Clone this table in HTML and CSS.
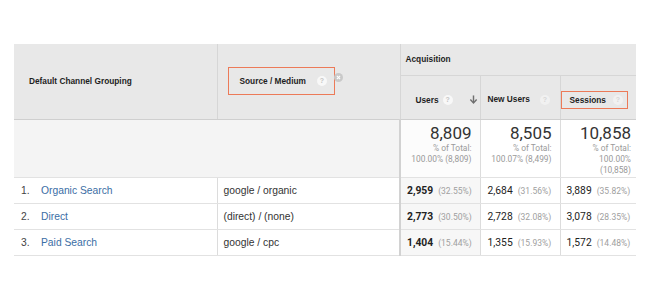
FILE: index.html
```html
<!DOCTYPE html>
<html>
<head>
<meta charset="utf-8">
<link rel="stylesheet" href="styles.css">
</head>
<body>
<div class="wrap">
<table class="report">
  <colgroup>
    <col class="c-dim1"><col class="c-dim2"><col class="c-users"><col class="c-new"><col class="c-sess">
  </colgroup>
  <thead>
    <tr class="hrow1">
      <th rowspan="2" class="h-dim1">Default Channel Grouping</th>
      <th rowspan="2" class="h-dim2">
        <div class="h-dim2-inner">
          <span class="annot annot-src">Source / Medium <span class="qicon">?</span></span>
          <span class="xicon"><svg viewBox="0 0 10 10" width="9" height="9"><circle cx="5" cy="5" r="5" fill="#c9c9c9"/><path d="M3.2 3.2 L6.8 6.8 M6.8 3.2 L3.2 6.8" stroke="#fff" stroke-width="1.2"/></svg></span>
        </div>
      </th>
      <th colspan="3" class="h-group">Acquisition</th>
    </tr>
    <tr class="hrow2">
      <th class="h-metric h-users">
        <div class="h-users-inner">
          <span>Users</span><span class="qicon">?</span>
          <span class="sortarrow"><svg viewBox="0 0 10 10" width="9" height="9"><path d="M5 0.5 V8.5" stroke="#6f6f6f" stroke-width="1.6"/><path d="M1.5 5 L5 8.8 L8.5 5" fill="none" stroke="#6f6f6f" stroke-width="1.6"/></svg></span>
        </div>
      </th>
      <th class="h-metric h-new"><span>New Users</span><span class="qicon">?</span></th>
      <th class="h-metric h-sess"><span class="annot annot-sess">Sessions <span class="qicon">?</span></span></th>
    </tr>
  </thead>
  <tbody>
    <tr class="totals">
      <td colspan="2" class="tot-blank"></td>
      <td class="tot tot-users"><div class="big">8,809</div><div class="sub">% of Total:<br>100.00% (8,809)</div></td>
      <td class="tot"><div class="big">8,505</div><div class="sub">% of Total:<br>100.07% (8,499)</div></td>
      <td class="tot tot-sess"><div class="big">10,858</div><div class="sub">% of Total:<br>100.00%<br>(10,858)</div></td>
    </tr>
    <tr class="row">
      <td class="d-dim1"><span class="idx">1.</span><a class="link">Organic Search</a></td>
      <td class="d-dim2">google / organic</td>
      <td class="m m-users"><b>2,959</b><span class="pct">(32.55%)</span></td>
      <td class="m m-new">2,684<span class="pct">(31.56%)</span></td>
      <td class="m m-sess">3,889<span class="pct">(35.82%)</span></td>
    </tr>
    <tr class="row">
      <td class="d-dim1"><span class="idx">2.</span><a class="link">Direct</a></td>
      <td class="d-dim2">(direct) / (none)</td>
      <td class="m m-users"><b>2,773</b><span class="pct">(30.50%)</span></td>
      <td class="m m-new">2,728<span class="pct">(32.08%)</span></td>
      <td class="m m-sess">3,078<span class="pct">(28.35%)</span></td>
    </tr>
    <tr class="row">
      <td class="d-dim1"><span class="idx">3.</span><a class="link">Paid Search</a></td>
      <td class="d-dim2">google / cpc</td>
      <td class="m m-users"><b>1,404</b><span class="pct">(15.44%)</span></td>
      <td class="m m-new">1,355<span class="pct">(15.93%)</span></td>
      <td class="m m-sess">1,572<span class="pct">(14.48%)</span></td>
    </tr>
  </tbody>
</table>
</div>
</body>
</html>
```

FILE: styles.css
```css
html, body {
  margin: 0;
  padding: 0;
  background: #ffffff;
}
.wrap {
  padding: 44px 0 0 14px;
}
.report {
  border-collapse: collapse;
  table-layout: fixed;
  width: 622px;
  font-family: "Liberation Sans", Arial, sans-serif;
  color: #222;
}
.c-dim1 { width: 203px; }
.c-dim2 { width: 183px; }
.c-users { width: 80px; }
.c-new { width: 80px; }
.c-sess { width: 76px; }

.report th {
  background: #e8e8e8;
  font-size: 8.3px;
  font-weight: bold;
  text-align: left;
  color: #1e1e1e;
  padding: 0;
}
.hrow1 { height: 31px; }
.hrow2 { height: 44px; }
.h-dim1 {
  padding-left: 15px !important;
  border-right: 1px solid #d6d6d6;
  border-bottom: 1px solid #cfcfcf;
  vertical-align: middle;
}
.h-dim2 {
  padding-left: 10px !important;
  border-right: 1px solid #d6d6d6;
  border-bottom: 1px solid #cfcfcf;
  vertical-align: middle;
}
.h-dim2-inner {
  display: flex;
  align-items: center;
  padding-bottom: 1px;
}
.annot {
  display: inline-flex;
  align-items: center;
  border: 1px solid #ec7a58;
  box-sizing: border-box;
}
.annot-src {
  height: 28px;
  width: 107px;
  padding-left: 11px;
}
.annot-src .qicon { margin-left: 11px; }
.xicon {
  display: inline-flex;
  margin-left: -1px;
  margin-top: -7px;
}
.qicon {
  display: inline-flex;
  align-items: center;
  justify-content: center;
  flex: none;
  width: 10px;
  height: 10px;
  border-radius: 50%;
  background: #f8f8f8;
  color: #c4c4c4;
  font-size: 7px;
  font-weight: bold;
  margin-left: 5px;
}
.h-group {
  padding-left: 5px !important;
  vertical-align: middle;
  border-bottom: 1px solid #d6d6d6;
}
.h-metric {
  vertical-align: middle;
  border-bottom: 1px solid #cfcfcf;
  padding-top: 5px !important;
  white-space: nowrap;
}
.h-users {
  padding-left: 15px !important;
  border-right: 1px solid #d6d6d6;
}
.h-users-inner {
  display: flex;
  align-items: center;
}
.h-users-inner .qicon { margin-left: 4px; }
.sortarrow {
  display: inline-flex;
  margin-left: auto;
  margin-right: 2px;
}
.h-new {
  padding-left: 7px !important;
  border-right: 1px solid #d6d6d6;
}
.h-new .qicon { margin-left: 10px; background: #f1f1f1; color: #d6d6d6; }
.h-sess {
  padding-left: 0;
}
.annot-sess {
  height: 18px;
  padding: 0 4px 0 8px;
}
.annot-sess .qicon { margin-left: 7px; background: #f1f1f1; color: #d6d6d6; }

/* totals */
.totals { height: 58px; }
.tot-blank {
  background: #f4f4f4;
  border-right: 2px solid #d2d2d2;
  border-bottom: 1px solid #e2e2e2;
}
.tot {
  vertical-align: top;
  text-align: right;
  padding: 3px 8px 0 0;
  border-right: 1px solid #dcdcdc;
  border-bottom: 1px solid #e2e2e2;
  background: #fff;
}
.tot-sess { padding-right: 5px; border-right: none; }
.tot-users { background: #fcfcfc; }
.big {
  font-family: Roboto, "Liberation Sans", sans-serif;
  font-size: 17px;
  line-height: 20px;
  color: #333;
}
.sub {
  font-family: Roboto, "Liberation Sans", sans-serif;
  font-size: 8.4px;
  line-height: 11px;
  color: #9a9a9a;
}

/* rows */
.row { height: 26px; }
.row td {
  font-size: 10.3px;
  border-bottom: 1px solid #e2e2e2;
  vertical-align: middle;
  white-space: nowrap;
}
.d-dim1 {
  padding-left: 7px;
  border-right: 1px solid #dcdcdc;
}
.idx {
  display: inline-block;
  width: 20px;
  color: #444;
}
.link { color: #3b6ea5; }
.d-dim2 {
  padding-left: 6px;
  color: #333;
  border-right: 2px solid #d2d2d2;
}
.m {
  font-family: Roboto, "Liberation Sans", sans-serif;
  color: #222;
}
.m b { font-weight: bold; }
.m-users {
  padding-left: 6px;
  background: #f7f7f7;
  border-right: 1px solid #dcdcdc;
}
.m-new {
  padding-left: 7px;
  border-right: 1px solid #dcdcdc;
}
.m-sess { padding-left: 6px; }
.pct {
  font-size: 8.5px;
  color: #a0a0a0;
  margin-left: 5px;
}
```
